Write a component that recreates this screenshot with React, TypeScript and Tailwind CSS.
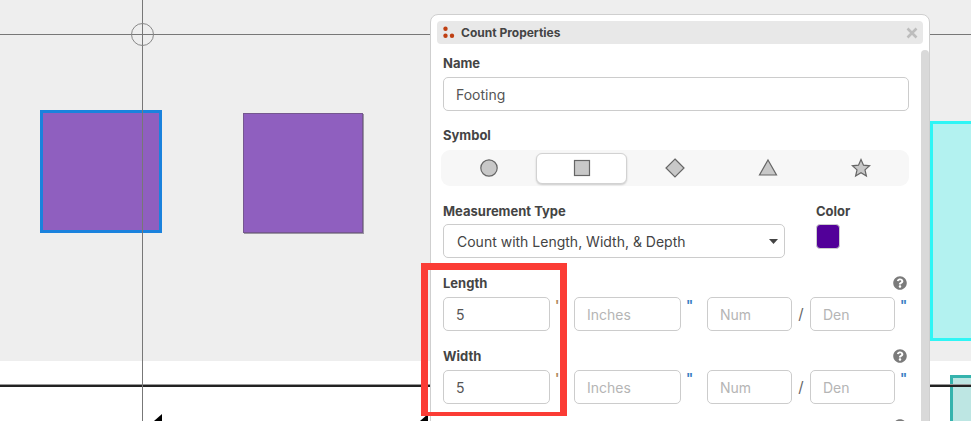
import React from "react";
import { FaQuestionCircle } from "react-icons/fa";

const labelCls = "text-[13px] font-bold leading-[16px] text-[#444]";
const inputCls =
  "h-[34px] rounded-[5px] border border-[#ccc] bg-white px-[12px] text-[14px] text-[#555] placeholder:text-[#b5b5b5] outline-none";

function DimensionRow({ label, value }: { label: string; value: string }) {
  return (
    <div>
      <div className="flex h-[16px] items-center justify-between pr-[16px]">
        <span className={labelCls}>{label}</span>
        <FaQuestionCircle size={14} color="#7b7b7b" />
      </div>
      <div className="mt-[6px] flex h-[34px]">
        <input readOnly defaultValue={value} className={`${inputCls} w-[107px]`} />
        <span className="ml-[5px] w-[19px] text-[13px] font-bold leading-[16px] text-[#b08a5e]">'</span>
        <input readOnly placeholder="Inches" className={`${inputCls} w-[107px]`} />
        <span className="ml-[5px] w-[21px] text-[13px] font-bold leading-[16px] text-[#3b7fc4]">"</span>
        <input readOnly placeholder="Num" className={`${inputCls} w-[85px]`} />
        <span className="flex w-[18px] items-center justify-center text-[15px] text-[#666]">/</span>
        <input readOnly placeholder="Den" className={`${inputCls} w-[85px]`} />
        <span className="ml-[5px] text-[13px] font-bold leading-[16px] text-[#3b7fc4]">"</span>
      </div>
    </div>
  );
}

function SymbolIcon({ kind }: { kind: string }) {
  const shape = { fill: "#c8c8c8", stroke: "#666", strokeWidth: 1.2 };
  return (
    <svg width="20" height="20" viewBox="0 0 20 20">
      {kind === "circle" && <circle cx="10" cy="10" r="8.2" {...shape} />}
      {kind === "square" && <rect x="2.5" y="2.5" width="15" height="15" {...shape} />}
      {kind === "diamond" && <polygon points="10,1 19,10 10,19 1,10" {...shape} />}
      {kind === "triangle" && <polygon points="10,2 18.5,17 1.5,17" {...shape} />}
      {kind === "star" && (
        <polygon points="10,1.5 12.5,7.2 18.6,7.8 14,11.9 15.4,18 10,14.8 4.6,18 6,11.9 1.4,7.8 7.5,7.2" {...shape} />
      )}
    </svg>
  );
}

function SymbolPicker() {
  return (
    <div className="mt-[7px] ml-[-2px] flex h-[36px] w-[468px] items-center rounded-[9px] bg-[#f7f7f7] px-[1px]">
      {["circle", "square", "diamond", "triangle", "star"].map((kind) => (
        <div
          key={kind}
          className={
            kind === "square"
              ? "mx-[1px] flex h-[31px] w-[91px] items-center justify-center rounded-[6px] border border-[#d2d2d2] bg-white shadow-[0_1px_2px_rgba(0,0,0,0.18)]"
              : "flex h-[31px] flex-1 items-center justify-center"
          }
        >
          <SymbolIcon kind={kind} />
        </div>
      ))}
    </div>
  );
}

function CountPanel() {
  return (
    <div className="absolute left-[430px] top-[14px] h-[440px] w-[500px] rounded-[8px] border border-[#cfcfcf] bg-white p-[6px]">
      <div className="flex h-[23px] items-center rounded-[4px] bg-[#e8e8e8] pl-[6px] pr-[5px]">
        <svg width="12" height="13" viewBox="0 0 12 13" fill="#bf3f12">
          <circle cx="2.5" cy="2.8" r="2.2" />
          <circle cx="2.5" cy="9.8" r="2.2" />
          <circle cx="9" cy="9.8" r="2.2" />
        </svg>
        <span className="ml-[6px] text-[12px] font-bold text-[#444]">Count Properties</span>
        <svg className="ml-auto" width="12" height="12" viewBox="0 0 12 12" stroke="#bdbdbd" strokeWidth="2.6">
          <path d="M1.5 1.5 10.5 10.5M10.5 1.5 1.5 10.5" />
        </svg>
      </div>

      <div className="absolute bottom-0 right-0 top-[35px] w-[8px] rounded-t-[4px] bg-[#d9d9d9]" />

      <div className="pl-[6px]">
        <div className={`${labelCls} mt-[11px]`}>Name</div>
        <input readOnly defaultValue="Footing" className={`${inputCls} mt-[6px] block w-[466px]`} />

        <div className={`${labelCls} mt-[16px]`}>Symbol</div>
        <SymbolPicker />

        <div className="mt-[17px] flex">
          <div className="w-[373px]">
            <div className={labelCls}>Measurement Type</div>
            <div className="mt-[5px] flex h-[34px] w-[342px] items-center justify-between rounded-[5px] border border-[#ccc] pl-[13px] pr-[6px] text-[14px] text-[#444]">
              <span>Count with Length, Width, &amp; Depth</span>
              <svg width="9" height="5" viewBox="0 0 9 5" fill="#444">
                <polygon points="0,0 9,0 4.5,5" />
              </svg>
            </div>
          </div>
          <div>
            <div className={labelCls}>Color</div>
            <div className="mt-[5px] h-[25px] w-[24px] rounded-[4px] border border-[#ccc] bg-[#520099]" />
          </div>
        </div>

        <div className="mt-[17px]">
          <DimensionRow label="Length" value="5" />
        </div>
        <div className="mt-[17px]">
          <DimensionRow label="Width" value="5" />
        </div>
        <div className="mt-[15px] flex justify-end pr-[16px]">
          <FaQuestionCircle size={14} color="#7b7b7b" />
        </div>
      </div>
    </div>
  );
}

export default function App() {
  return (
    <div className="relative h-[421px] w-[971px] overflow-hidden bg-white font-['Inter',sans-serif]">
      <div className="h-[361px] bg-[#eeeeee]" />

      {/* drawing canvas */}
      <div className="absolute left-[243px] top-[113px] h-[120px] w-[120px] border border-[#75578f] bg-[#8f5fbf] shadow-[1px_1px_0_#9a95a0]" />
      <div className="absolute left-[40px] top-[110px] h-[123px] w-[122px] border-[3px] border-[#1a82dd] bg-[#8f5fbf]" />
      <div className="absolute left-[930px] top-[121px] h-[220px] w-[60px] border-[3px] border-[#2ff5f5] bg-[#b3f2f0]" />
      <div className="absolute left-[950px] top-[375px] h-[80px] w-[60px] border-[3px] border-[#35b3ad] bg-[#bde6e3]" />
      <div className="absolute left-0 top-[384px] h-[3px] w-full border-t border-[#999] bg-[#222]" />
      <div className="absolute left-0 top-[34px] h-px w-full bg-[#777]" />
      <div className="absolute left-[142px] top-0 h-full w-px bg-[#777]" />
      <div className="absolute left-[131px] top-[23px] h-[23px] w-[23px] rounded-full border border-[#888]" />
      <svg className="absolute left-[154px] top-[414px]" width="8" height="7" viewBox="0 0 8 7" fill="#000">
        <polygon points="8,0 8,7 0,7" />
      </svg>
      <svg className="absolute left-[420px] top-[414px]" width="8" height="7" viewBox="0 0 8 7" fill="#000">
        <polygon points="8,0 8,7 0,7" />
      </svg>

      <CountPanel />

      {/* red annotation */}
      <div className="absolute left-[421px] top-[263px] h-[153px] w-[146px] border-[7px] border-b-[4px] border-[#fb3c35]" />
    </div>
  );
}
